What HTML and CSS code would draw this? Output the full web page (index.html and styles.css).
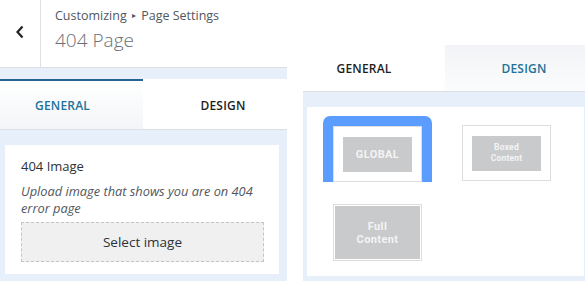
FILE: index.html
```html
<!doctype html>
<html lang="en">
    <head>
        <meta charset="UTF-8" />
        <meta name="viewport" content="width=device-width, initial-scale=1.0" />
        <title>Page Settings - 404 Page</title>
        <link rel="stylesheet" href="styles.css">
    </head>
    <body>
        <div class="screens">
            <!-- Customizer sidebar -->
            <section class="sidebar">
                <header class="sidebar-header">
                    <button class="back-button" aria-label="Back">
                        <svg class="back-icon" viewBox="0 0 10 14" xmlns="http://www.w3.org/2000/svg">
                            <path d="M7.5 1.5 2.5 7l5 5.5" />
                        </svg>
                    </button>
                    <div class="header-titles">
                        <div class="breadcrumb">Customizing <span class="crumb-sep">▸</span> Page Settings</div>
                        <h1 class="section-title">404 Page</h1>
                    </div>
                </header>

                <nav class="tabs">
                    <button class="tab active">GENERAL</button>
                    <button class="tab">DESIGN</button>
                </nav>

                <div class="control-card">
                    <div class="control-label">404 Image</div>
                    <p class="control-description">
                        Upload image that shows you are on 404 error page
                    </p>
                    <button class="select-image">Select image</button>
                </div>
            </section>

            <!-- Layout options -->
            <section class="layout-panel">
                <nav class="layout-tabs">
                    <button class="layout-tab current">GENERAL</button>
                    <button class="layout-tab other">DESIGN</button>
                </nav>

                <div class="layout-body">
                    <div class="layout-card">
                        <div class="option selected">
                            <div class="option-frame">
                                <div class="option-thumb">GLOBAL</div>
                            </div>
                        </div>
                        <div class="option">
                            <div class="option-frame">
                                <div class="option-thumb small">Boxed<br />Content</div>
                            </div>
                        </div>
                        <div class="option">
                            <div class="option-frame full">
                                <div class="option-thumb">Full<br />Content</div>
                            </div>
                        </div>
                    </div>
                </div>
            </section>
        </div>
    </body>
</html>
```

FILE: styles.css
```css
*,
*::before,
*::after {
    margin: 0;
    padding: 0;
    box-sizing: border-box;
}

:root {
    --panel-bg: #e7effa;
    --border: #dcdfe3;
    --accent: #22719b;
    --text: #1e1e1e;
    --muted: #50575e;
    --option-blue: #5b9dff;
    --thumb: #c9cacc;
}

body {
    font-family: "Open Sans", "Noto Sans", sans-serif;
    background: white;
    color: var(--text);
    width: 585px;
    height: 281px;
    overflow: hidden;
}

button {
    font: inherit;
    border: none;
    background: none;
    color: inherit;
}

.screens {
    display: flex;
    height: 281px;
}

/* Left: customizer sidebar */
.sidebar {
    width: 287px;
    flex: none;
    background: var(--panel-bg);
    display: flex;
    flex-direction: column;
}

.sidebar-header {
    height: 68px;
    background: white;
    border-bottom: 1px solid var(--border);
    display: flex;
}

.back-button {
    width: 41px;
    border-right: 1px solid var(--border);
    display: flex;
    align-items: center;
    justify-content: center;
    padding-bottom: 4px;
}

.back-icon {
    width: 10px;
    height: 14px;
    fill: none;
    stroke: #1d2327;
    stroke-width: 2.2;
}

.header-titles {
    padding: 6px 0 0 14px;
}

.breadcrumb {
    font-size: 12.5px;
    line-height: 20px;
    color: var(--muted);
}

.crumb-sep {
    font-size: 8px;
    position: relative;
    top: -2px;
    padding: 0 2px;
}

.section-title {
    font-size: 19px;
    font-weight: 300;
    line-height: 26px;
    color: #6c7075;
}

.tabs {
    margin-top: 11px;
    height: 51px;
    display: flex;
    border-bottom: 1px solid var(--border);
    background: white;
}

.tab {
    flex: 1;
    padding-left: 16px;
    font-size: 12px;
    font-weight: 600;
    letter-spacing: 0.2px;
    color: var(--text);
    border-top: 2px solid transparent;
}

.tab.active {
    flex: none;
    width: 143px;
    padding: 0 18px 0 0;
    color: var(--accent);
    border-top-color: #236590;
    background: linear-gradient(#ffffff, #f3f5f8);
}

.control-card {
    margin: 15px 8px 0 5px;
    height: 129px;
    background: white;
    padding: 11px 16px 0;
}

.control-label {
    font-size: 13px;
    font-weight: 500;
    line-height: 20px;
    color: #2c3338;
}

.control-description {
    margin-top: 7px;
    font-size: 12.8px;
    font-style: italic;
    line-height: 17px;
    color: #50575e;
}

.select-image {
    margin-top: 5px;
    width: 243px;
    height: 40px;
    background: #f0f0f1;
    border: 1px dashed #c3c4c7;
    font-size: 13.5px;
    color: #2c3338;
}

/* Right: layout options */
.layout-panel {
    flex: 1;
    padding: 45px 0 0 16px;
    display: flex;
    flex-direction: column;
}

.layout-tabs {
    height: 47px;
    display: flex;
    border-bottom: 1px solid var(--border);
}

.layout-tab {
    width: 142px;
    font-size: 12px;
    font-weight: 600;
    letter-spacing: 0.2px;
}

.layout-tab.current {
    padding-right: 20px;
    color: var(--text);
}

.layout-tab.other {
    padding-left: 16px;
    color: var(--accent);
    background: linear-gradient(#f1f3f6, #fbfcfd);
}

.layout-body {
    flex: 1;
    background: var(--panel-bg);
    padding: 15px 3px 5px 4px;
}

.layout-card {
    height: 100%;
    background: white;
    padding: 9px 16px 0;
    display: grid;
    grid-template-columns: 109px 109px;
    grid-template-rows: 66px 67px;
    column-gap: 20px;
    row-gap: 12px;
}

.option {
    padding: 10px 10px 0;
    border-radius: 7px 7px 0 0;
}

.option:nth-child(2) {
    margin-top: -1px;
}

.option.selected {
    background: var(--option-blue);
}

.option-frame {
    height: 56px;
    background: white;
    border: 1px solid #dddddd;
    display: flex;
    align-items: center;
    justify-content: center;
}

.option-frame.full {
    height: 57px;
    padding: 1px;
}

.option-thumb {
    width: 69px;
    height: 35px;
    background: var(--thumb);
    color: #f4f4f4;
    font-family: Roboto, sans-serif;
    font-size: 11px;
    font-weight: 700;
    letter-spacing: 0.4px;
    line-height: 13px;
    display: flex;
    align-items: center;
    justify-content: center;
    text-align: center;
}

.option-thumb.small {
    font-size: 8.5px;
    line-height: 11px;
    letter-spacing: 0.2px;
}

.option-frame.full .option-thumb {
    width: 100%;
    height: 100%;
}
```
